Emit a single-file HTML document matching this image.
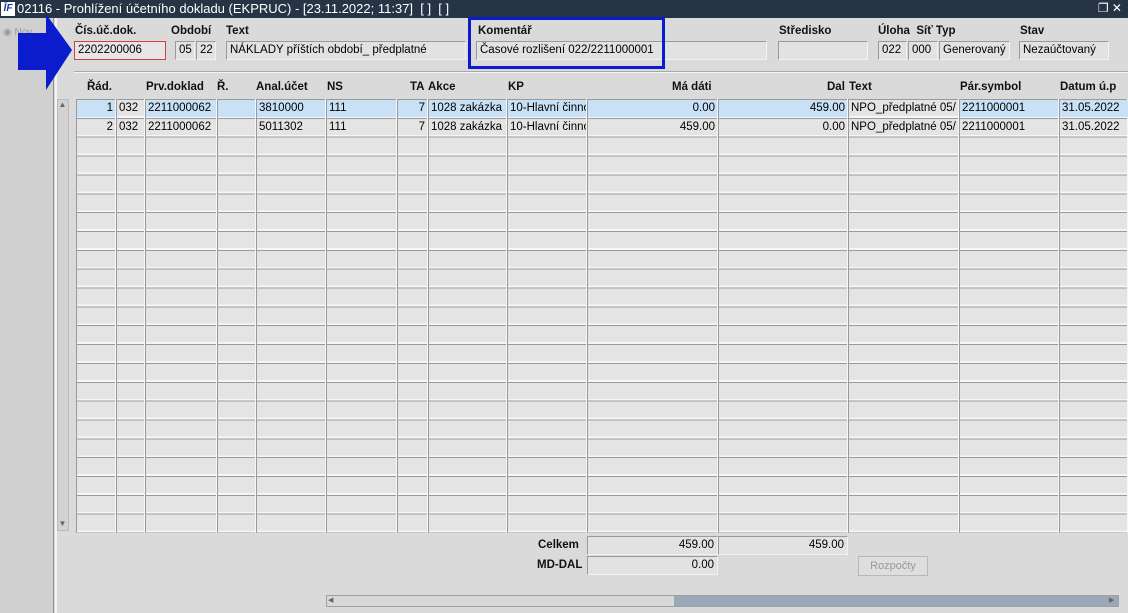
<!DOCTYPE html>
<html><head><meta charset="utf-8"><style>
*{box-sizing:border-box;margin:0;padding:0}
body{width:1128px;height:613px;overflow:hidden;background:#dadada;font-family:"Liberation Sans",Arial,sans-serif;font-size:11px;color:#000;position:relative}
.a{position:absolute}
#title{left:0;top:0;width:1128px;height:18px;background:#263445;color:#fff;font-size:13px;line-height:18px;padding-left:17px}
#side{left:0;top:18px;width:54px;height:595px;background:#d0d0d0;border-right:1px solid #8f8f8f}
#side2{left:55px;top:18px;width:2px;height:595px;background:#f4f4f4}
.lbl{font-weight:bold;font-size:11.5px;color:#111}
.fld{background:#e2e2e2;border:1px solid #9a9a9a;border-right-color:#f2f2f2;border-bottom-color:#f2f2f2;height:19px;line-height:17px;padding-left:3px;font-size:11.5px;white-space:nowrap;overflow:hidden}
.col{position:absolute;top:99px;height:434px;background:repeating-linear-gradient(to bottom,#9a9a9a 0 1px,#e4e4e4 1px 17px,#f6f6f6 17px 18.85px);border-left:1px solid #9a9a9a;border-right:1px solid #f6f6f6}
.c{position:absolute;height:17px;line-height:17px;font-size:11.5px;white-space:nowrap;overflow:hidden;padding:0 2px}
.r{text-align:right}
.blue{background:#c9e1f6}
.hd{position:absolute;top:81px;font-weight:bold;font-size:11.5px;color:#111}
</style></head><body>
<div id="title" class="a">02116 - Prohlížení účetního dokladu (EKPRUC) - [23.11.2022; 11:37]&nbsp; [ ]&nbsp; [ ]</div>
<div class="a" style="left:1px;top:2px;width:14px;height:14px;background:#fff;color:#1a3a9a;font-size:10px;font-weight:bold;line-height:14px;text-align:center;font-style:italic">ĪF</div>
<div class="a" style="right:6px;top:1px;color:#fff;font-size:12px">&#x2750; ✕</div>
<div id="side" class="a"></div><div id="side2" class="a"></div>
<div class="a" style="left:3px;top:27px;color:#999;font-size:10px">◉ Nov</div>
<svg class="a" style="left:0;top:0" width="80" height="95"><polygon points="18,33 46,33 46,14 72,50 46,90 46,70 18,70" fill="#0a1ccc"/></svg>

<div class="a lbl" style="left:75px;top:25px">Čís.úč.dok.</div>
<div class="a lbl" style="left:171px;top:25px">Období</div>
<div class="a lbl" style="left:226px;top:25px">Text</div>
<div class="a lbl" style="left:478px;top:25px">Komentář</div>
<div class="a lbl" style="left:779px;top:25px">Středisko</div>
<div class="a lbl" style="left:878px;top:25px">Úloha&nbsp; Síť Typ</div>
<div class="a lbl" style="left:1020px;top:25px">Stav</div>

<div class="a fld" style="left:74px;top:41px;width:92px;border:1px solid #d04040;background:#e6e6e6">2202200006</div>
<div class="a fld" style="left:175px;top:41px;width:20px">05</div>
<div class="a fld" style="left:196px;top:41px;width:20px">22</div>
<div class="a fld" style="left:226px;top:41px;width:240px">NÁKLADY příštích období_ předplatné</div>
<div class="a fld" style="left:476px;top:41px;width:291px">Časové rozlišení 022/2211000001</div>
<div class="a" style="left:468px;top:17px;width:197px;height:52px;border:3px solid #0a1ccc"></div>
<div class="a fld" style="left:778px;top:41px;width:90px"></div>
<div class="a fld" style="left:878px;top:41px;width:29px">022</div>
<div class="a fld" style="left:908px;top:41px;width:30px">000</div>
<div class="a fld" style="left:939px;top:41px;width:71px">Generovaný</div>
<div class="a fld" style="left:1019px;top:41px;width:90px">Nezaúčtovaný</div>
<div class="a" style="left:74px;top:71px;width:1054px;height:2px;border-top:1px solid #a8a8a8;border-bottom:1px solid #f4f4f4"></div>

<div class="hd" style="left:87px">Řád.</div>
<div class="hd" style="left:146px">Prv.doklad</div>
<div class="hd" style="left:217px">Ř.</div>
<div class="hd" style="left:256px">Anal.účet</div>
<div class="hd" style="left:327px">NS</div>
<div class="hd" style="left:410px">TA</div>
<div class="hd" style="left:428px">Akce</div>
<div class="hd" style="left:508px">KP</div>
<div class="hd" style="left:672px">Má dáti</div>
<div class="hd" style="left:827px">Dal</div>
<div class="hd" style="left:849px">Text</div>
<div class="hd" style="left:960px">Pár.symbol</div>
<div class="hd" style="left:1060px">Datum ú.p</div>

<div class="a" style="left:57px;top:99px;width:12px;height:432px;background:#d2d2d2;border:1px solid #bbb"></div>
<div class="a" style="left:57px;top:100px;width:11px;height:11px;color:#666;font-size:8px;text-align:center">▲</div>
<div class="a" style="left:57px;top:519px;width:11px;height:11px;color:#666;font-size:8px;text-align:center">▼</div>

<div class="col" style="left:76px;width:40px"></div>
<div class="col" style="left:116px;width:29px"></div>
<div class="col" style="left:145px;width:72px"></div>
<div class="col" style="left:217px;width:39px"></div>
<div class="col" style="left:256px;width:70px"></div>
<div class="col" style="left:326px;width:71px"></div>
<div class="col" style="left:397px;width:31px"></div>
<div class="col" style="left:428px;width:79px"></div>
<div class="col" style="left:507px;width:80px"></div>
<div class="col" style="left:587px;width:131px"></div>
<div class="col" style="left:718px;width:130px"></div>
<div class="col" style="left:848px;width:111px"></div>
<div class="col" style="left:959px;width:100px"></div>
<div class="col" style="left:1059px;width:69px"></div>

<div class="c r blue" style="left:77px;top:100px;width:38px">1</div>
<div class="c" style="left:117px;top:100px;width:27px">032</div>
<div class="c blue" style="left:146px;top:100px;width:70px">2211000062</div>
<div class="c blue" style="left:218px;top:100px;width:37px"></div>
<div class="c blue" style="left:257px;top:100px;width:68px">3810000</div>
<div class="c blue" style="left:327px;top:100px;width:69px">111</div>
<div class="c r blue" style="left:398px;top:100px;width:29px">7</div>
<div class="c blue" style="left:429px;top:100px;width:77px">1028 zakázka</div>
<div class="c blue" style="left:508px;top:100px;width:78px">10-Hlavní činnost</div>
<div class="c r blue" style="left:588px;top:100px;width:129px">0.00</div>
<div class="c r blue" style="left:719px;top:100px;width:128px">459.00</div>
<div class="c" style="left:849px;top:100px;width:109px">NPO_předplatné 05/</div>
<div class="c blue" style="left:960px;top:100px;width:98px">2211000001</div>
<div class="c blue" style="left:1060px;top:100px;width:68px">31.05.2022</div>
<div class="c r" style="left:77px;top:119px;width:38px">2</div>
<div class="c" style="left:117px;top:119px;width:27px">032</div>
<div class="c" style="left:146px;top:119px;width:70px">2211000062</div>
<div class="c" style="left:257px;top:119px;width:68px">5011302</div>
<div class="c" style="left:327px;top:119px;width:69px">111</div>
<div class="c r" style="left:398px;top:119px;width:29px">7</div>
<div class="c" style="left:429px;top:119px;width:77px">1028 zakázka</div>
<div class="c" style="left:508px;top:119px;width:78px">10-Hlavní činnost</div>
<div class="c r" style="left:588px;top:119px;width:129px">459.00</div>
<div class="c r" style="left:719px;top:119px;width:128px">0.00</div>
<div class="c" style="left:849px;top:119px;width:109px">NPO_předplatné 05/</div>
<div class="c" style="left:960px;top:119px;width:98px">2211000001</div>
<div class="c" style="left:1060px;top:119px;width:68px">31.05.2022</div>

<div class="a lbl" style="left:538px;top:539px">Celkem</div>
<div class="a lbl" style="left:537px;top:559px">MD-DAL</div>
<div class="a fld r" style="left:587px;top:536px;width:131px;padding-right:3px">459.00</div>
<div class="a fld r" style="left:718px;top:536px;width:130px;padding-right:3px">459.00</div>
<div class="a fld r" style="left:587px;top:556px;width:131px;padding-right:3px">0.00</div>
<div class="a" style="left:858px;top:556px;width:70px;height:20px;border:1px solid #b8b8b8;background:#dedede;color:#999;font-size:11px;line-height:18px;text-align:center">Rozpočty</div>

<div class="a" style="left:326px;top:595px;width:793px;height:12px;background:#9aa8b8;border:1px solid #a0a0a0"></div>
<div class="a" style="left:327px;top:596px;width:347px;height:10px;background:#d8d8d8"></div>
<div class="a" style="left:328px;top:596px;width:10px;height:10px;color:#666;font-size:7px;line-height:10px">◀</div>
<div class="a" style="left:1109px;top:596px;width:10px;height:10px;color:#666;font-size:7px;line-height:10px">▶</div>
</body></html>
